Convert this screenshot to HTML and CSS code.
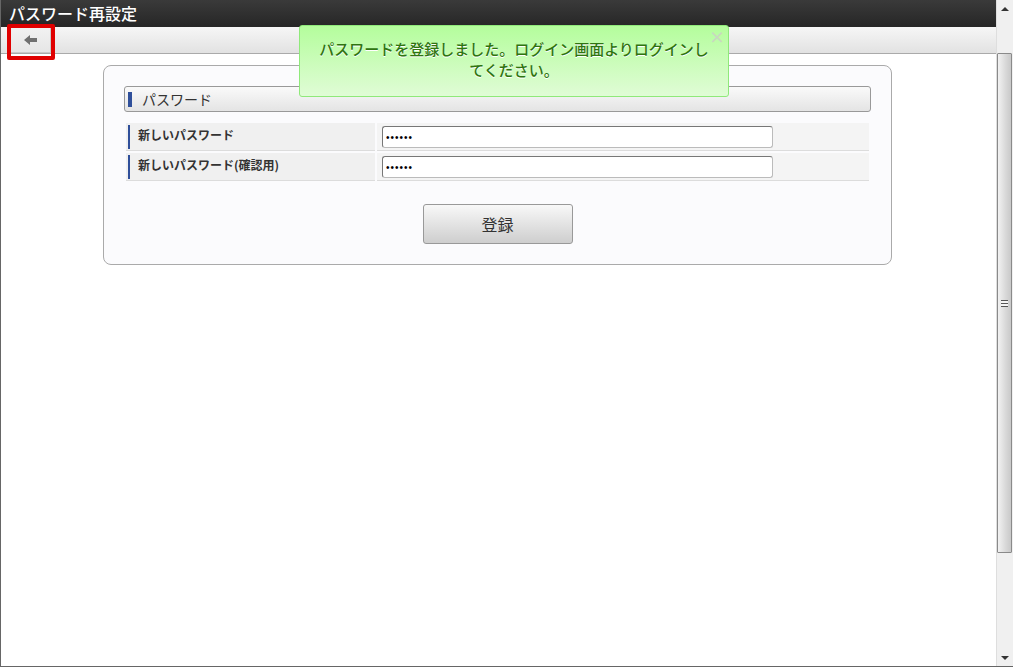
FILE: index.html
```html
<!DOCTYPE html>
<html lang="ja">
<head>
    <meta charset="UTF-8">
    <title>パスワード再設定</title>
    <link rel="stylesheet" href="styles.css">
</head>
<body>
    <div class="window">
        <div class="main">
            <div class="titlebar">パスワード再設定</div>
            <div class="toolbar">
                <div class="back-btn">
                    <svg width="14" height="12" viewBox="0 0 14 12">
                        <path d="M0 6 L6 1 L6 4 L13 4 L13 8 L6 8 L6 11 Z" fill="#707070"/>
                    </svg>
                </div>
            </div>
            <div class="highlight"></div>

            <div class="content">
                <div class="panel">
                    <div class="section-head"><span class="bar"></span>パスワード</div>
                    <table class="form-table">
                        <tr>
                            <th><span class="mark"></span>新しいパスワード</th>
                            <td><input type="password" value="aaaaaa"></td>
                        </tr>
                        <tr>
                            <th><span class="mark"></span>新しいパスワード(確認用)</th>
                            <td><input type="password" value="aaaaaa"></td>
                        </tr>
                    </table>
                    <div class="actions">
                        <button class="submit">登録</button>
                    </div>
                </div>
            </div>

            <div class="notice">
                <span class="close">&times;</span>
                パスワードを登録しました。ログイン画面よりログインし<br>てください。
            </div>
        </div>
        <div class="scrollbar">
            <div class="arrow up"></div>
            <div class="thumb"><span class="grip"></span></div>
            <div class="track"></div>
            <div class="arrow down"></div>
        </div>
    </div>
</body>
</html>
```

FILE: styles.css
```css
html, body {
    margin: 0;
    padding: 0;
}
body {
    font-family: "Noto Sans CJK JP", "Liberation Sans", sans-serif;
    font-size: 13px;
    color: #333;
    background: #fff;
}
.window {
    width: 1013px;
    height: 667px;
    display: flex;
    box-sizing: border-box;
    border-left: 1px solid #666;
    border-bottom: 1px solid #666;
    overflow: hidden;
}
.main {
    position: relative;
    width: 995px;
    display: flex;
    flex-direction: column;
}
.titlebar {
    height: 27px;
    line-height: 26px;
    padding-left: 8px;
    background: linear-gradient(#3a3a3a, #262626);
    color: #fff;
    font-size: 16px;
    font-weight: 500;
}
.toolbar {
    height: 26px;
    border-bottom: 1px solid #aaa;
    background: linear-gradient(#f6f6f6, #e2e2e2);
    display: flex;
    align-items: center;
}
.back-btn {
    margin-left: 9px;
    width: 41px;
    height: 26px;
    box-sizing: border-box;
    border: 1px solid #c8c8c8;
    background: linear-gradient(#f2f2f2, #e6e6e6);
    display: flex;
    align-items: center;
    justify-content: center;
}
.highlight {
    position: absolute;
    left: 6px;
    top: 24px;
    width: 48px;
    height: 36px;
    box-sizing: border-box;
    border: 4px solid #e00000;
    border-radius: 2px;
}
.content {
    padding: 11px 0 0 102px;
}
.panel {
    width: 789px;
    box-sizing: border-box;
    border: 1px solid #aaa;
    border-radius: 8px;
    background: #fbfbfd;
    padding: 20px 20px 20px;
}
.section-head {
    height: 26px;
    box-sizing: border-box;
    border: 1px solid #999;
    border-radius: 3px;
    background: linear-gradient(#fafafa, #e4e4e4);
    display: flex;
    align-items: center;
    font-size: 14px;
    color: #333;
}
.section-head .bar {
    width: 4px;
    height: 15px;
    background: #2f4f9a;
    margin: 0 10px 0 3px;
}
.form-table {
    width: 743px;
    margin: 11px 0 0 2px;
    border-collapse: separate;
    border-spacing: 0;
}
.form-table th, .form-table td {
    height: 28px;
    padding: 0;
    border-bottom: 2px solid #fbfbfd;
    box-shadow: inset 0 -1px 0 #dcdcdc;
}
.form-table th {
    width: 249px;
    background: #f0f0f0;
    text-align: left;
    font-weight: bold;
    font-size: 12px;
    color: #333;
    border-right: 2px solid #fbfbfd;
}
.form-table th .mark {
    display: inline-block;
    width: 2px;
    height: 24px;
    background: #2f4f9a;
    vertical-align: middle;
    margin: 0 8px 0 2px;
}
.form-table td {
    background: #f4f4f4;
    padding-left: 5px;
}
.form-table input {
    width: 391px;
    height: 22px;
    box-sizing: border-box;
    border: 1px solid #888;
    border-color: #777 #bbb #bbb #777;
    border-radius: 3px;
    background: #fff;
    padding: 0 3px;
    font-size: 10px;
    letter-spacing: 1px;
}
.actions {
    display: flex;
    justify-content: center;
    margin-top: 21px;
}
.submit {
    width: 150px;
    height: 40px;
    border: 1px solid #999;
    border-radius: 3px;
    background: linear-gradient(#f8f8f8, #cecece);
    font-family: "Noto Sans CJK JP", sans-serif;
    font-size: 16px;
    color: #333;
}
.notice {
    position: absolute;
    left: 298px;
    top: 25px;
    width: 430px;
    height: 72px;
    box-sizing: border-box;
    border: 1px solid #8fe97a;
    border-radius: 3px;
    background: linear-gradient(#b4fd9c, #e0fcd6);
    color: #2f7410;
    font-size: 15px;
    font-weight: 500;
    line-height: 21px;
    text-align: center;
    padding-top: 12px;
    text-shadow: 0 1px 0 #fff;
}
.notice .close {
    position: absolute;
    right: 3px;
    top: 1px;
    color: #c8d8c0;
    font-size: 16px;
    font-weight: bold;
    line-height: 18px;
    text-shadow: none;
}
.scrollbar {
    width: 17px;
    display: flex;
    flex-direction: column;
    background: #f0f0f0;
    border-left: 1px solid #dedede;
    box-sizing: border-box;
}
.arrow {
    height: 17px;
    display: flex;
    align-items: center;
    justify-content: center;
}
.arrow::before {
    content: "";
    border-left: 4px solid transparent;
    border-right: 4px solid transparent;
}
.arrow.up::before {
    border-bottom: 4px solid #333;
}
.arrow.down::before {
    border-top: 4px solid #333;
}
.thumb {
    margin: 36px 1px 0 0;
    height: 500px;
    box-sizing: border-box;
    border: 1px solid #8a8a8a;
    border-radius: 1px;
    background: linear-gradient(to right, #f2f2f2, #d8d8d8 60%, #c9c9c9);
    display: flex;
    align-items: center;
    justify-content: center;
}
.grip {
    width: 7px;
    height: 7px;
    background: repeating-linear-gradient(#555 0 1px, #f4f4f4 1px 3px);
}
.track {
    flex: 1;
}
```
